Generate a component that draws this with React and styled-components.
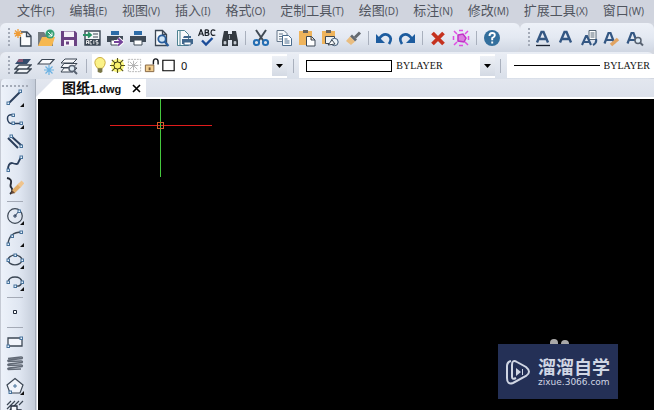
import React from "react";
import styled, { createGlobalStyle } from "styled-components";

const GlobalStyle = createGlobalStyle`
  * { box-sizing: border-box; }
  body { margin: 0; overflow: hidden; font-family: "Noto Sans", "Noto Sans CJK SC", sans-serif; }
  button, select { font: inherit; color: inherit; border: 0; padding: 0; background: none; }
`;

const Window = styled.div`
  height: 100vh;
  display: flex;
  flex-direction: column;
  background: #d3d7e0;
`;

const MenuBar = styled.nav`
  height: 23px;
  flex: none;
  display: flex;
  align-items: center;
  gap: 15px;
  padding: 0 0 2px 17px;
  background: #d0d4de;
  color: #50555e;
`;

const MenuButton = styled.button`
  display: flex;
  align-items: baseline;
  white-space: nowrap;
  font-size: 13px;
  line-height: 20px;
`;

const Key = styled.span`
  font-size: 10px;
`;

const BarRow = styled.div`
  flex: none;
  display: flex;
  height: ${(p) => p.$height}px;
`;

const Toolbar = styled.div`
  display: flex;
  align-items: center;
  flex: ${(p) => (p.$fill ? "1" : "none")};
  min-width: 0;
  padding-left: 7px;
  padding-right: ${(p) => (p.$fill ? 0 : 17)}px;
  border-radius: 6px 6px 6px 0;
  background: linear-gradient(#edf1f8, #e4e9f2 50%, #cfd6e2);
`;

const Grip = styled.span`
  flex: none;
  width: ${(p) => (p.$across ? 28 : 4)}px;
  height: ${(p) => (p.$across ? 3 : 21)}px;
  background: radial-gradient(circle, #a4abb8 1px, transparent 1px) 0 0 / 4px 4px;
`;

const ToolButton = styled.button`
  flex: none;
  width: 23px;
  height: 22px;
  display: grid;
  place-items: center;
`;

const Separator = styled.span`
  flex: none;
  width: ${(p) => (p.$wide ? 12 : 8)}px;
  height: 14px;
  display: flex;
  justify-content: center;
  &::before { content: ""; width: 1px; background: #a9b0bd; }
`;

const SideSeparator = styled.span`
  flex: none;
  width: 16px;
  height: 8px;
  display: flex;
  align-items: center;
  &::before { content: ""; flex: 1; height: 1px; background: #a4aab6; }
`;

const PropertyBar = styled(Toolbar)`
  background: linear-gradient(#eaeef5, #d9dfe9);
`;

const Combo = styled.label`
  flex: ${(p) => p.$flex};
  min-width: 0;
  height: 24px;
  display: flex;
  align-items: center;
  background: #fff;
  color: #111;
  padding-left: ${(p) => (p.$icons ? 0 : 7)}px;
  overflow: hidden;
`;

const ComboIcons = styled.span`
  display: flex;
  flex: none;
`;

const Value = styled.select`
  appearance: none;
  flex: 1;
  min-width: 0;
  padding-left: 4px;
  font-family: ${(p) => (p.$serif ? '"Liberation Serif", serif' : '"Noto Sans", sans-serif')};
  font-size: ${(p) => (p.$serif ? 10 : 11)}px;
  line-height: 16px;
`;

const Arrow = styled.span`
  flex: none;
  width: 15px;
  height: 20px;
  display: grid;
  place-items: center;
  background: linear-gradient(#eef1f6, #d4dae4);
`;

const Swatch = styled.span`
  flex: none;
  width: 86px;
  height: 12px;
  border: 1px solid #000;
`;

const LineSample = styled.span`
  flex: none;
  width: 86px;
  height: 1px;
  background: #000;
`;

const Workspace = styled.div`
  flex: 1;
  min-height: 0;
  display: flex;
`;

const SideBar = styled.div`
  flex: none;
  width: 36px;
  display: flex;
  flex-direction: column;
  align-items: center;
  padding: 5px 6px 0 0;
  overflow: hidden;
  border-left: 1px solid #c5cad4;
  border-right: 1px solid #a6adb9;
  border-radius: 4px 0 0 0;
  background: linear-gradient(90deg, #edf2fa, #dfe6f1 55%, #c4ccd9);
`;

const Document = styled.main`
  flex: 1;
  min-width: 0;
  display: flex;
  flex-direction: column;
`;

const TabStrip = styled.div`
  flex: none;
  height: 20px;
  display: flex;
  align-items: flex-end;
  background: linear-gradient(#e3e7ef, #dce1eb);
  border-bottom: 2px solid #fff;
`;

const Tab = styled.div`
  height: 18px;
  width: 110px;
  display: flex;
  align-items: center;
  justify-content: space-between;
  padding: 0 4px 0 26px;
  background: #fff;
  clip-path: polygon(0 100%, 18px 0, 100% 0, 100% 100%);
  color: #111;
`;

const TabName = styled.span`
  display: flex;
  align-items: baseline;
  font-size: 14px;
  font-weight: 700;
  line-height: 16px;
  white-space: nowrap;
`;

const TabLatin = styled.span`
  font-family: "Liberation Sans", sans-serif;
  font-size: 11px;
`;

const CloseButton = styled.button`
  width: 12px;
  height: 16px;
  display: grid;
  place-items: center;
`;

const Canvas = styled.section`
  flex: 1;
  min-height: 0;
  position: relative;
  margin-left: 2px;
  background: #000;
  box-shadow: -1px 0 #fff;
`;

const Crosshair = styled.svg`
  position: absolute;
  left: 71px;
  top: 0;
`;

const Watermark = styled.aside`
  position: absolute;
  right: 36px;
  bottom: 11px;
  width: 120px;
  height: 55px;
  display: flex;
  align-items: center;
  gap: 7px;
  padding-left: 8px;
  background: #243056;
  color: #d0d6e4;
`;

const Dots = styled.svg`
  position: absolute;
  left: 50px;
  bottom: 55px;
`;

const Brand = styled.div`
  display: flex;
  flex-direction: column;
  white-space: nowrap;
`;

const BrandName = styled.strong`
  font-size: 18px;
  line-height: 22px;
  font-weight: 700;
  font-family: "Noto Sans CJK SC", sans-serif;
`;

const BrandSite = styled.span`
  font-family: "DejaVu Sans", sans-serif;
  font-size: 9px;
  line-height: 11px;
`;

const navy = "#2b3f5c";
const ink = "#3c4754";

const PrinterShape = () => (
  <>
    <path d="M5 2h8v4H5z" fill="#2d6ca8" />
    <path d="M1 7h16v6H1z" fill="#3f4a57" />
    <path d="M5 11h8v5H5z" fill="#fff" stroke="#3f4a57" />
  </>
);

const PageShape = () => <path d="M3.500 1.500h7l4 4v11h-11zM10.500 1.500v4h4" fill="#f8fafc" stroke={ink} strokeWidth="1.300" />;

const Corner = () => <path d="M18 14v4h-4z" fill="#111" />;

const Node = ({ x, y }) => <rect x={x - 1} y={y - 1} width="2.500" height="2.500" fill="#e8f2fb" stroke="#47729b" />;

const art = {
  new: (
    <>
      <path d="M7 3h6l4 4v10H6.500V8M12.500 3v4.500H17" fill="#fbfcfd" stroke={ink} strokeWidth="1.300" />
      <path d="M4 0v9M0 4.500h8.500M1 1.500l6 6M7 1.500l-6 6" stroke="#ef9c37" strokeWidth="1.300" />
    </>
  ),
  open: (
    <>
      <path d="M1 3h6l2 3h7v11H1z" fill="#747b80" />
      <path d="M5 8h13l-3 9H1z" fill="#f6b850" />
      <circle cx="13" cy="5" r="4.500" fill="#35a176" />
      <path d="M11 3l4 4M15 3.500V7h-3.500" stroke="#fff" fill="none" />
    </>
  ),
  save: (
    <>
      <path d="M1 2h14l2 2v13H1z" fill="#6a4283" />
      <path d="M4 2.500h10V8H4zM4 11h10v6H4z" fill="#f5f1f8" />
      <path d="M6 12.500h3v3H6z" fill="#6a4283" />
    </>
  ),
  acis: (
    <>
      <path d="M2 2h15v14H2z" fill="#f4f6f8" stroke={ink} strokeWidth="1.400" />
      <path d="M2 10h15v6H2z" fill={ink} />
      <path d="M3.500 15v-3.500h2V15M3.500 13.500h2M9 11.500H7V15h2M10.800 11.500V15M15 11.500h-2v1.700h2V15h-2" fill="none" stroke="#fff" strokeWidth=".8" />
      <path d="M0 6h7M5 3.500L8 6 5 8.500" stroke="#299164" strokeWidth="1.800" fill="none" />
      <path d="M10 5h5M10 8h5" stroke={ink} />
    </>
  ),
  plot: (
    <>
      <PrinterShape />
      <path d="M8 13h7M12 9.500l4 3.500-4 3.500" fill="none" stroke="#fff" strokeWidth="4" />
      <path d="M8 13h7M12 9.500l4 3.500-4 3.500" fill="none" stroke="#75449b" strokeWidth="2" />
    </>
  ),
  print: <PrinterShape />,
  preview: (
    <>
      <PageShape />
      <circle cx="10" cy="10" r="3.700" fill="#cfe4f6" stroke="#295d9b" strokeWidth="1.800" />
      <path d="M12.500 12.500l4 4.500" stroke="#295d9b" strokeWidth="2.200" />
    </>
  ),
  pagePrint: (
    <>
      <path d="M2.500 1.500h7l4 4v11h-11zM5 2v14" fill="#f8fafc" stroke="#4d8291" />
      <path d="M8 9h8v-2H9zM7 10h11v5H7z" fill="#40668c" />
      <path d="M9 13h7v3H9z" fill="#fff" stroke="#40668c" />
    </>
  ),
  spell: (
    <>
      <path d="M0.500 7L3 0.500 5.500 7M1.500 5h3M7.200.8V6.500H9q2-.2 2-1.500T9 3.600H7.200M9 3.600q1.600-.3 1.600-1.500T9 .8H7.200M17.300 1.500q-4-2-4.300 2 .3 4 4.300 2.500" fill="none" stroke="#161b22" strokeWidth="1.200" />
      <path d="M4 11.500l4 4 6.500-6.500" fill="none" stroke="#1c4d99" strokeWidth="2.400" />
    </>
  ),
  find: (
    <>
      <path d="M3 2h4v3h4V2h4l2 10v5h-6v-6H7v6H1v-5z" fill="#343a41" />
      <path d="M3 12.500h2V15H3zM13 12.500h2V15h-2zM8.500 6v4" fill="#c3c9d0" stroke="#c3c9d0" strokeWidth=".7" />
    </>
  ),
  cut: (
    <>
      <path d="M4 1l7.500 11M14 1L6.500 12" stroke="#424b55" strokeWidth="2" />
      <circle cx="4.500" cy="13.500" r="2.600" fill="none" stroke="#246eb3" strokeWidth="2" />
      <circle cx="13.500" cy="13.500" r="2.600" fill="none" stroke="#246eb3" strokeWidth="2" />
    </>
  ),
  copy: (
    <>
      <path d="M2 1.500h7l3 3v8H2zM4 5h4M4 7.500h4M4 10h3" fill="#f4f7fa" stroke="#65778a" />
      <path d="M7.500 6.500h6l3 3v7h-9zM9.500 10h3M9.500 12h5M9.500 14h5" fill="#fff" stroke="#496b8c" />
    </>
  ),
  paste: (
    <>
      <path d="M1 2h13v14H1z" fill="#efb45c" />
      <path d="M5 1h5v3H5z" fill="#68645f" />
      <path d="M8.500 7.500h5l3.500 3.500v6H8.500zM13 7.500V11h4" fill="#fff" stroke={ink} />
    </>
  ),
  pasteBlock: (
    <>
      <path d="M1 2h13v13H1z" fill="#efb45c" />
      <path d="M5 1h5v3H5z" fill="#68645f" />
      <path d="M4.500 7.500h9v7h-9z" fill="#eef3f7" stroke={ink} />
      <circle cx="13.500" cy="13" r="3.700" fill="#edf4f9" stroke="#3d5875" />
      <path d="M7 16l4-5 3 4z" fill="#fff" stroke={ink} />
    </>
  ),
  brush: (
    <>
      <path d="M16 3.500l-5 5" stroke="#656a70" strokeWidth="3" />
      <path d="M8 5.500l5 5-2 2-5-5z" fill="#656a70" />
      <path d="M6 7.500l5 5-4 3.500-5-4z" fill="#e9bd80" />
    </>
  ),
  undo: (
    <>
      <path d="M4 10Q8 4 13 6q5 3 1 9" fill="none" stroke="#1d5c9f" strokeWidth="2.700" />
      <path d="M1 5v9h9z" fill="#1d5c9f" />
    </>
  ),
  redo: (
    <>
      <path d="M14 10Q10 4 5 6q-5 3-1 9" fill="none" stroke="#1d5c9f" strokeWidth="2.700" />
      <path d="M17 5v9H8z" fill="#1d5c9f" />
    </>
  ),
  erase: <path d="M3.500 4l11 11M14.500 4l-11 11" stroke="#c5321f" strokeWidth="3.800" />,
  explode: (
    <>
      <path d="M6 6l5-1 3 4-2 4-6-1z" fill="#db80e1" stroke="#c132c7" strokeWidth="1.500" />
      <path d="M2 2l3 3M16 2l-3 3M2 16l3-3M16 16l-3-3M7 1.500h4M7 16.500h4M1.500 7v4M16.500 7v4" stroke="#e04de4" strokeWidth="1.500" />
    </>
  ),
  help: (
    <>
      <circle cx="9" cy="9" r="8" fill="#336f9d" />
      <path d="M6.500 7q0-3 2.700-3t2.600 2.300Q11.800 8 9.200 9.200v2M9.200 12.500v2" fill="none" stroke="#fff" strokeWidth="1.900" />
    </>
  ),
  layers: (
    <>
      <path d="M5 12h12l-4 4H1zM5 8h12l-4 4H1z" fill="#f2f5f8" stroke={ink} strokeWidth="1.300" />
      <path d="M5 2h12l-4 5H1z" fill="#344b6a" />
      <path d="M5 2h4v3H3z" fill="#875571" />
    </>
  ),
  freeze: (
    <>
      <path d="M5 2.500h12l-4 4.500H1z" fill="#fafbfd" stroke={ink} strokeWidth="1.200" />
      <path d="M12 8v10M7 13h10M8.500 9.500l7 7M15.500 9.500l-7 7" stroke="#6bb2e2" strokeWidth="1.200" />
    </>
  ),
  layerFind: (
    <>
      <path d="M5 2h12l-4 4H1zM4 6.500h13l-4 4H1zM4 11h13l-4 4H1z" fill="#f5f7fa" stroke={ink} />
      <circle cx="12" cy="11.500" r="3" fill="#dfebf4" stroke="#586271" strokeWidth="1.500" />
      <path d="M14 14l3 3" stroke="#586271" strokeWidth="2" />
    </>
  ),
  bulb: (
    <>
      <path d="M6 12Q3 9 3 6a5.500 5.500 0 0 1 11 0q0 3-3 6z" fill="#fbf288" stroke="#c9a93a" />
      <path d="M6 12h5v4l-2 1-3-1z" fill="#797647" />
    </>
  ),
  sun: (
    <>
      <circle cx="9" cy="9" r="7" fill="#fbf77d" />
      <path d="M9 1v16M1 9h16M3 3l12 12M15 3L3 15" stroke="#56541d" strokeWidth="1.200" />
      <circle cx="9" cy="9" r="3.800" fill="#f9f36c" stroke="#34330e" />
    </>
  ),
  viewport: (
    <>
      <path d="M2.500 2.500h13v13h-13z" fill="none" stroke="#b5b5b5" strokeDasharray="2 1" />
      <path d="M8 4v10M3 9h10M4 5l8 8M12 5l-8 8" stroke="#b0b0b0" />
    </>
  ),
  unlock: (
    <>
      <path d="M11 8V5q0-3 2.500-3T16 5v3" fill="none" stroke="#15181d" strokeWidth="1.500" />
      <path d="M2.500 8.500h9v7h-9z" fill="#f2cf91" stroke="#846440" />
      <path d="M6 11h2v3H6z" fill="#7b5938" />
    </>
  ),
  color: <path d="M3 3.500h12v11H3z" fill="#fff" stroke="#000" strokeWidth="1.200" />,
  line: (
    <>
      <path d="M3 14L14 3" stroke={navy} strokeWidth="2" />
      <Node x={2} y={14} /><Node x={14} y={2} /><Corner />
    </>
  ),
  polyline: (
    <>
      <path d="M7 4Q1 3 1.500 8T7 12.500h8" fill="none" stroke={navy} strokeWidth="1.500" />
      <Node x={7} y={4} /><Node x={7} y={12} /><Node x={15} y={12} /><Corner />
    </>
  ),
  doubleLine: (
    <>
      <path d="M5 3l11 10M2 5l10 10" stroke={navy} strokeWidth="2" />
      <Node x={5} y={3} /><Node x={15} y={13} />
    </>
  ),
  spline: (
    <>
      <path d="M2 15q0-7 4-7 6 2 6 0l3-6" fill="none" stroke={navy} strokeWidth="1.800" />
      <Node x={2} y={15} /><Node x={15} y={2} />
    </>
  ),
  sketch: (
    <>
      <path d="M1 1q5 1 4 5t0 4q3 4-1 7" fill="none" stroke="#252b36" strokeWidth="1.900" />
      <path d="M7 15l7-7" stroke="#dfac68" strokeWidth="4" />
      <path d="M13 9l4-4" stroke="#efc48d" strokeWidth="4" />
      <path d="M6 13l3 3-4 1z" fill="#6c4a35" />
    </>
  ),
  circle: (
    <>
      <circle cx="9" cy="9" r="7.300" fill="none" stroke={ink} strokeWidth="1.200" />
      <path d="M7 9h4M9 7v4M9 9l4-5" stroke={navy} />
      <Node x={13} y={4} /><Corner />
    </>
  ),
  arc: (
    <>
      <path d="M2 15Q3 3 16 3" fill="none" stroke={ink} strokeWidth="1.300" />
      <Node x={2} y={15} /><Node x={6} y={7} /><Node x={15} y={3} /><Corner />
    </>
  ),
  ellipse: (
    <>
      <ellipse cx="9" cy="9" rx="7" ry="4.800" fill="none" stroke={ink} strokeWidth="1.300" />
      <Node x={2} y={9} /><Node x={16} y={9} /><Node x={9} y={4} /><Corner />
    </>
  ),
  ellipseArc: (
    <>
      <path d="M2 9Q3 4 9 4t7 5q-1 5-7 4" fill="none" stroke={ink} strokeWidth="1.300" />
      <Node x={2} y={9} /><Node x={16} y={9} /><Node x={9} y={13} /><Corner />
    </>
  ),
  point: <path d="M7.500 7.500h3v3h-3z" fill="#fff" stroke="#222b3b" />,
  rectangle: (
    <>
      <path d="M2 5h14v8H2z" fill="#f2f5fb" stroke={ink} strokeWidth="1.300" />
      <Node x={2} y={13} /><Node x={15} y={5} />
    </>
  ),
  coil: (
    <path d="M2 3.500l13-1.500q2 0 1 1.500L3 5q-2 .5-.5 1.500L15 6q2 0 1 1.500L3 9q-2 .5-.5 1.500L15 10q2 0 1 1.500L3 13q-2 .5-.5 1.500L15 14" fill="none" stroke="#626a76" strokeWidth="1.600" />
  ),
  polygon: (
    <>
      <path d="M9 1.500L17 8l-3 8H4L1 8z" fill="#f1f4fa" stroke={ink} strokeWidth="1.200" />
      <path d="M7 9h4M9 7v4" stroke="#47729b" />
      <Node x={4} y={15} /><Corner />
    </>
  ),
  hatch: (
    <>
      <path d="M1 6l4-4M1 10l8-8M1 14l12-12M9 6l4-4M13 6l4-4M1 18l4-4" stroke={ink} strokeWidth="1.200" />
      <path d="M5 7h6v4h4v7H5z" fill="#f4f6fa" stroke="#222b3b" strokeWidth="1.300" />
    </>
  ),
};

const letter = <path d="M3 13.500L7.500 3h2L14 13.500M5 10h7" fill="none" stroke="#345783" strokeWidth="2.400" />;
const smallLetter = <path d="M1.500 14.500L5.500 4h2l4 10.500M3.500 11h6" fill="none" stroke="#345783" strokeWidth="2.200" />;
Object.assign(art, {
  textUnderline: <>{letter}<path d="M2 16.500h14" stroke="#1a2230" strokeWidth="1.300" /></>,
  text: letter,
  textPage: (
    <>
      <path d="M9 1.500h7v9H9zM10.500 4h4M10.500 6h4M10.500 8h4" fill="#fff" stroke="#576675" />
      <path d="M2 16L6 7h1l4 9M4 13h5M16 10q1 4-3 6" fill="none" stroke="#345783" strokeWidth="2.100" />
    </>
  ),
  textEdit: (
    <>
      {smallLetter}
      <path d="M8 16l7-6" stroke="#e2a462" strokeWidth="3.600" />
    </>
  ),
  textFind: (
    <>
      {smallLetter}
      <circle cx="12" cy="11.500" r="3" fill="#dce9f3" stroke="#586271" strokeWidth="1.500" />
      <path d="M14 13.500l3 3" stroke="#586271" strokeWidth="2" />
    </>
  ),
});

const Icon = ({ name, size = 18 }) => (
  <svg width={size} height={size} viewBox="0 0 18 18" aria-hidden="true">{art[name]}</svg>
);

const ToolList = ({ items, Divider = Separator }) =>
  items.map((name, i) =>
    name === "|" ? (
      <Divider key={i} />
    ) : (
      <ToolButton key={i} type="button" aria-label={name}>
        <Icon name={name} />
      </ToolButton>
    )
  );

const DropArrow = () => (
  <Arrow>
    <svg width="7" height="4" aria-hidden="true"><path d="M0 0h7L3.500 4z" fill="#000" /></svg>
  </Arrow>
);

const menus = [
  ["文件", "F"], ["编辑", "E"], ["视图", "V"], ["插入", "I"], ["格式", "O"], ["定制工具", "T"],
  ["绘图", "D"], ["标注", "N"], ["修改", "M"], ["扩展工具", "X"], ["窗口", "W"],
];
const standardTools = [
  "new", "open", "save", "acis", "plot", "print", "preview", "pagePrint", "spell", "find", "|",
  "cut", "copy", "paste", "pasteBlock", "brush", "|", "undo", "redo", "|", "erase", "explode", "|", "help",
];
const textTools = ["textUnderline", "text", "textPage", "textEdit", "textFind"];
const layerTools = ["layers", "freeze", "layerFind"];
const layerStates = ["bulb", "sun", "viewport", "unlock", "color"];
const drawTools = [
  "line", "polyline", "doubleLine", "spline", "sketch", "|", "circle", "arc", "ellipse", "ellipseArc", "|",
  "point", "|", "rectangle", "coil", "polygon", "hatch",
];

export default function App() {
  return (
    <Window>
      <GlobalStyle />
      <MenuBar>
        {menus.map(([label, key]) => (
          <MenuButton key={key} type="button">{label}<Key>({key})</Key></MenuButton>
        ))}
      </MenuBar>
      <BarRow $height={29}>
        <Toolbar>
          <Grip />
          <ToolList items={standardTools} />
        </Toolbar>
        <Toolbar $fill>
          <Grip />
          <ToolList items={textTools} />
        </Toolbar>
      </BarRow>
      <BarRow $height={27}>
        <PropertyBar $fill>
          <Grip />
          <ToolList items={layerTools} />
          <Separator $wide />
          <Combo $flex="1 1 196px" $icons>
            <ComboIcons>
              {layerStates.map((name) => <Icon key={name} name={name} size={17} />)}
            </ComboIcons>
            <Value aria-label="图层" defaultValue="0"><option>0</option></Value>
            <DropArrow />
          </Combo>
          <Separator $wide />
          <Combo $flex="1 1 196px">
            <Swatch />
            <Value $serif aria-label="颜色"><option>BYLAYER</option></Value>
            <DropArrow />
          </Combo>
          <Separator $wide />
          <Combo $flex="1 1 148px">
            <LineSample />
            <Value $serif aria-label="线型"><option>BYLAYER</option></Value>
          </Combo>
        </PropertyBar>
      </BarRow>
      <Workspace>
        <SideBar>
          <Grip $across />
          <ToolList items={drawTools} Divider={SideSeparator} />
        </SideBar>
        <Document>
          <TabStrip>
            <Tab>
              <TabName>图纸<TabLatin>1.dwg</TabLatin></TabName>
              <CloseButton type="button" aria-label="关闭">
                <svg width="9" height="9" aria-hidden="true"><path d="M1 1l7 7M8 1L1 8" stroke="#000" strokeWidth="1.600" /></svg>
              </CloseButton>
            </Tab>
          </TabStrip>
          <Canvas>
            <Crosshair width="104" height="80" aria-hidden="true" shapeRendering="crispEdges">
              <path d="M1 26h102v1H1z" fill="#e01c1c" />
              <path d="M51 0h1v78h-1z" fill="#45c83e" />
              <path d="M48.500 23.500h6v6h-6z" fill="none" stroke="#d2602c" />
            </Crosshair>
            <Watermark>
              <Dots width="26" height="5" aria-hidden="true">
                <circle cx="6" cy="4" r="4" fill="#aaa9a9" /><circle cx="17" cy="5" r="4" fill="#aaa9a9" />
              </Dots>
              <svg width="25" height="28" viewBox="0 0 25 28" aria-hidden="true">
                <path d="M5 3q-4 1-4 5v12q0 7 6 5l13-7q6-4 0-9L11 4Q6 1 6 7v12q0 3 4 1" fill="none" stroke="#d0d6e4" strokeWidth="2" />
                <path d="M10 10l5 4-5 4zM16 11h1v6h-1z" fill="#d0d6e4" />
              </svg>
              <Brand>
                <BrandName>溜溜自学</BrandName>
                <BrandSite>zixue.3066.com</BrandSite>
              </Brand>
            </Watermark>
          </Canvas>
        </Document>
      </Workspace>
    </Window>
  );
}
